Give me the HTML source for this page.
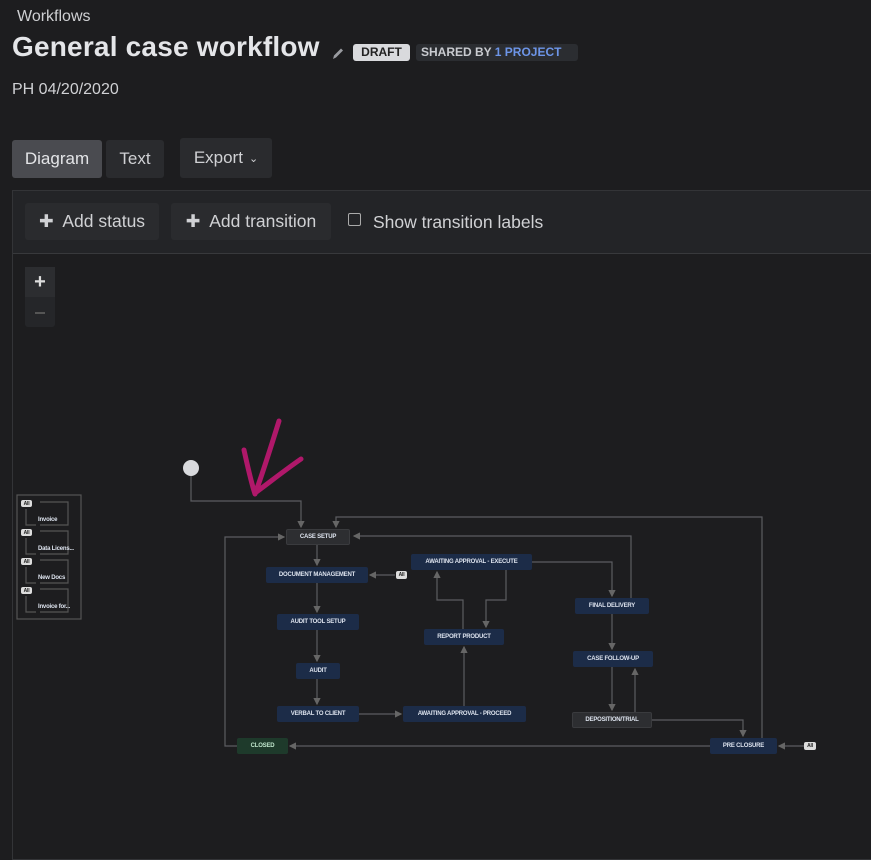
<!DOCTYPE html>
<html><head><meta charset="utf-8"><style>
*{margin:0;padding:0;box-sizing:border-box}
body{width:871px;height:853px;background:#1d1d1f;font-family:"Liberation Sans",sans-serif;color:#d6d7da;position:relative;overflow:hidden}
.a{position:absolute}
.btn{position:absolute;background:#2a2b2e;border-radius:3px;font-size:17px;color:#d0d1d4;display:flex;align-items:center;justify-content:center}
.lz{position:absolute;font-size:6px;font-weight:bold;color:#dde3ee;display:flex;align-items:center;justify-content:center;border-radius:2px;letter-spacing:-.2px;white-space:nowrap}
.bl{background:#1c2c48}.gr{background:#2d2e31;border:1px solid #3a3b3e}
</style></head><body>
<div class="a" style="left:17px;top:8px;font-size:16px;color:#cfd0d3">Workflows</div>
<div class="a" style="left:12px;top:31px;font-size:28px;font-weight:bold;color:#e4e5e8;letter-spacing:0.2px">General case workflow</div>
<svg class="a" style="left:330px;top:45px" width="16" height="16" viewBox="0 0 16 16"><path d="M3 14 L4 10.5 L11 3.5 L13 5.5 L6 12.5 Z" fill="#9a9ba0"/></svg>
<div class="a" style="left:353px;top:44px;width:57px;height:17px;background:#d9dadd;color:#222;font-size:12px;font-weight:bold;border-radius:3px;text-align:center;line-height:17px">DRAFT</div>
<div class="a" style="left:416px;top:44px;width:162px;height:17px;background:#2b2d31;font-size:12px;font-weight:bold;border-radius:3px;line-height:17px;padding-left:5px;color:#c9cbd0">SHARED BY <span style="color:#6d95e8">1 PROJECT</span></div>
<div class="a" style="left:12px;top:81px;font-size:16px;color:#d0d1d4">PH 04/20/2020</div>
<div class="btn" style="left:12px;top:140px;width:90px;height:38px;background:#4a4b50;color:#e4e5e8">Diagram</div>
<div class="btn" style="left:106px;top:140px;width:58px;height:38px">Text</div>
<div class="btn" style="left:180px;top:138px;width:92px;height:40px">Export <span style="font-size:11px;margin-left:6px">&#8964;</span></div>
<div class="a" style="left:12px;top:190px;width:870px;height:670px;border:1px solid #333437;background:#1d1d1f"></div>
<div class="a" style="left:13px;top:191px;width:860px;height:63px;background:#232427;border-bottom:1px solid #38393c"></div>
<div class="btn" style="left:25px;top:203px;width:134px;height:37px;font-size:17.5px">✚&nbsp; Add status</div>
<div class="btn" style="left:171px;top:203px;width:160px;height:37px;font-size:17.5px">✚&nbsp; Add transition</div>
<div class="a" style="left:348px;top:213px;width:13px;height:13px;border:1.5px solid #aaa;border-radius:2px"></div>
<div class="a" style="left:373px;top:212px;font-size:17.5px;color:#d0d1d4">Show transition labels</div>
<div class="a" style="left:25px;top:267px;width:30px;height:60px;background:#252629;border-radius:3px"></div>
<div class="a" style="left:25px;top:267px;width:30px;height:30px;background:#2c2d30;color:#ddd;font-size:20px;font-weight:bold;text-align:center;line-height:30px">+</div>
<div class="a" style="left:35px;top:312px;width:10px;height:2px;background:#555"></div>
<svg class="a" style="left:0;top:0" width="871" height="853">
<defs><marker id="ar" markerWidth="6" markerHeight="6" refX="5" refY="3" orient="auto"><path d="M0 0L6 3L0 6Z" fill="#666"/></marker></defs>
<g fill="none" stroke="#5c5d61" stroke-width="1.2">
<rect x="17" y="495" width="64" height="124" stroke="#555"/>
<path d="M40 502H68V525H40M40 531H68V554H40M40 560H68V583H40M40 589H68V612H40" stroke="#555"/>
<path d="M26 509V525H36M26 538V554H36M26 567V583H36M26 596V612H36" stroke="#555"/>
<path d="M191 476V501H301V527" marker-end="url(#ar)"/>
<path d="M762 738V517H336V527" marker-end="url(#ar)"/>
<path d="M631 598V536H354" marker-end="url(#ar)"/>
<path d="M317 545V565" marker-end="url(#ar)"/>
<path d="M395 575H370" marker-end="url(#ar)"/>
<path d="M317 583V612" marker-end="url(#ar)"/>
<path d="M317 630V661" marker-end="url(#ar)"/>
<path d="M317 679V704" marker-end="url(#ar)"/>
<path d="M359 714H401" marker-end="url(#ar)"/>
<path d="M464 706V647" marker-end="url(#ar)"/>
<path d="M463 629V600H437V572" marker-end="url(#ar)"/>
<path d="M506 570V600H486V627" marker-end="url(#ar)"/>
<path d="M532 562H612V596" marker-end="url(#ar)"/>
<path d="M612 614V649" marker-end="url(#ar)"/>
<path d="M612 667V710" marker-end="url(#ar)"/>
<path d="M635 712V669" marker-end="url(#ar)"/>
<path d="M652 720H743V736" marker-end="url(#ar)"/>
<path d="M710 746H290" marker-end="url(#ar)"/>
<path d="M804 746H779" marker-end="url(#ar)"/>
<path d="M237 746H225V537H284" marker-end="url(#ar)"/>
</g>
<circle cx="191" cy="468" r="8" fill="#d9dadd"/>
<path d="M244 450C248 468 251 482 255 494M255 494C262 475 270 450 279 421M255 493C270 482 285 470 301 459" stroke="#b0186a" stroke-width="5" fill="none" stroke-linecap="round"/>
</svg>
<div class="lz" style="left:21px;top:500px;width:11px;height:7px;background:#ddd;color:#222;font-size:5px">All</div>
<div class="lz" style="left:21px;top:529px;width:11px;height:7px;background:#ddd;color:#222;font-size:5px">All</div>
<div class="lz" style="left:21px;top:558px;width:11px;height:7px;background:#ddd;color:#222;font-size:5px">All</div>
<div class="lz" style="left:21px;top:587px;width:11px;height:7px;background:#ddd;color:#222;font-size:5px">All</div>
<div class="lz" style="left:38px;top:517px;font-size:6px">Invoice</div>
<div class="lz" style="left:38px;top:546px;font-size:6px">Data Licens...</div>
<div class="lz" style="left:38px;top:575px;font-size:6px">New Docs</div>
<div class="lz" style="left:38px;top:604px;font-size:6px">Invoice for...</div>
<div class="lz gr" style="left:286px;top:529px;width:64px;height:16px">CASE SETUP</div>
<div class="lz bl" style="left:266px;top:567px;width:102px;height:16px">DOCUMENT MANAGEMENT</div>
<div class="lz bl" style="left:277px;top:614px;width:82px;height:16px">AUDIT TOOL SETUP</div>
<div class="lz bl" style="left:296px;top:663px;width:44px;height:16px">AUDIT</div>
<div class="lz bl" style="left:277px;top:706px;width:82px;height:16px">VERBAL TO CLIENT</div>
<div class="lz bl" style="left:403px;top:706px;width:123px;height:16px">AWAITING APPROVAL - PROCEED</div>
<div class="lz bl" style="left:424px;top:629px;width:80px;height:16px">REPORT PRODUCT</div>
<div class="lz bl" style="left:411px;top:554px;width:121px;height:16px">AWAITING APPROVAL - EXECUTE</div>
<div class="lz bl" style="left:575px;top:598px;width:74px;height:16px">FINAL DELIVERY</div>
<div class="lz bl" style="left:573px;top:651px;width:80px;height:16px">CASE FOLLOW-UP</div>
<div class="lz gr" style="left:572px;top:712px;width:80px;height:16px">DEPOSITION/TRIAL</div>
<div class="lz bl" style="left:710px;top:738px;width:67px;height:16px">PRE CLOSURE</div>
<div class="lz" style="left:237px;top:738px;width:51px;height:16px;background:#1e3a2b;color:#bfe6cc">CLOSED</div>
<div class="lz" style="left:396px;top:571px;width:11px;height:8px;background:#ddd;color:#222;font-size:5px">All</div>
<div class="lz" style="left:804px;top:742px;width:12px;height:8px;background:#ddd;color:#222;font-size:5px">All</div>
</body></html>
